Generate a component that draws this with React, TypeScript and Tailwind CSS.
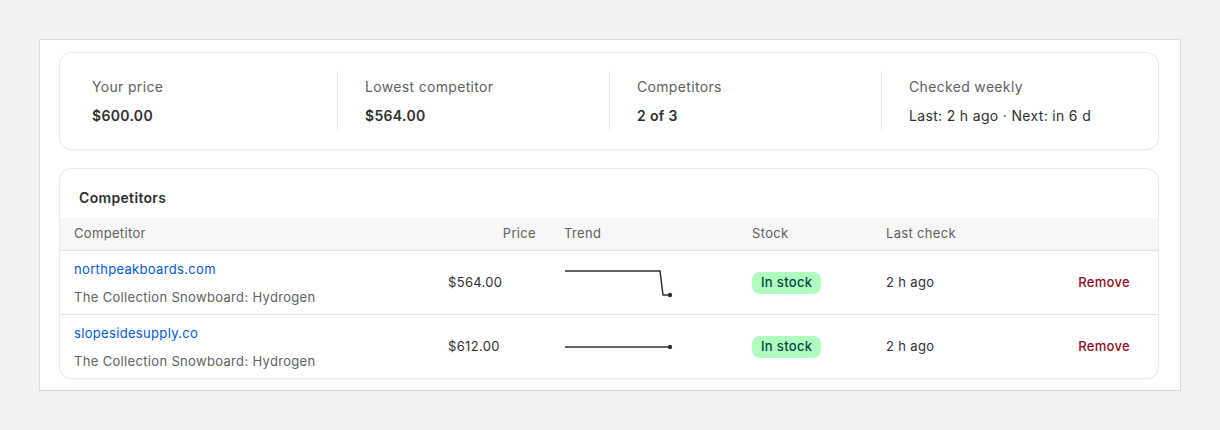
import React from "react";

const stats = [
  { label: "Your price", value: "$600.00" },
  { label: "Lowest competitor", value: "$564.00" },
  { label: "Competitors", value: "2 of 3" },
  { label: "Checked weekly", value: "Last: 2 h ago · Next: in 6 d", plain: true },
];

const rows = [
  {
    domain: "northpeakboards.com",
    product: "The Collection Snowboard: Hydrogen",
    price: "$564.00",
    trend: "M1 3 L96 3 L99 27 L106 27",
    end: [106, 27],
  },
  {
    domain: "slopesidesupply.co",
    product: "The Collection Snowboard: Hydrogen",
    price: "$612.00",
    trend: "M1 15 L106 15",
    end: [106, 15],
  },
];

const cols = "grid grid-cols-[374px_116px_188px_134px_1fr_150px]";

function Sparkline({ d, end }: { d: string; end: number[] }) {
  return (
    <svg width="110" height="30" viewBox="0 0 110 30" className="block">
      <path d={d} fill="none" stroke="#303030" strokeWidth="1.5" />
      <circle cx={end[0]} cy={end[1]} r="2.2" fill="#303030" />
    </svg>
  );
}

export default function App() {
  return (
    <div
      className="min-h-[430px] bg-[#f1f2f4] pt-[39px] pl-[39px] pr-[39px] tracking-[0.33px] text-[#303030]"
      style={{ fontFamily: "Inter, 'Noto Sans', sans-serif" }}
    >
      <div className="h-[352px] border border-[#dadbdd] bg-white pt-[13px] pl-[20px] pr-[22px]">
        {/* Summary */}
        <div className="rounded-xl bg-white px-[5px] py-[18px] shadow-[0_0_0_1px_#ebebeb,0_1px_2px_0_rgba(0,0,0,0.12)]">
          <div className="grid grid-cols-4">
            {stats.map((s, i) => (
              <div
                key={s.label}
                className={`flex h-[60px] flex-col justify-center gap-[9px] pl-[27px] ${
                  i > 0 ? "border-l border-[#ebebeb]" : ""
                }`}
              >
                <div className="text-[14px] leading-5 text-[#616161]">{s.label}</div>
                <div
                  className={`text-[14px] leading-5 ${
                    s.plain ? "font-normal text-[#303030]" : "font-semibold text-[#303030]"
                  }`}
                >
                  {s.value}
                </div>
              </div>
            ))}
          </div>
        </div>

        {/* Competitors table */}
        <div className="mt-[20px] overflow-hidden rounded-xl bg-white shadow-[0_0_0_1px_#ebebeb,0_1px_2px_0_rgba(0,0,0,0.12)]">
          <div className="px-[19px] pt-[19px] pb-[10px] text-[14px] font-semibold leading-5 text-[#303030]">
            Competitors
          </div>
          <div
            className={`${cols} h-[33px] items-center border-b border-[#e3e3e3] bg-[#f7f7f7] text-[13px] text-[#616161]`}
          >
            <div className="pl-[14px]">Competitor</div>
            <div className="pr-[14px] text-right">Price</div>
            <div className="pl-[14px]">Trend</div>
            <div className="pl-[14px]">Stock</div>
            <div className="pl-[14px]">Last check</div>
            <div />
          </div>
          {rows.map((r, i) => (
            <div
              key={r.domain}
              className={`${cols} items-center text-[13px] ${
                i < rows.length - 1 ? "h-[64px] border-b border-[#e3e3e3]" : "h-[63px]"
              }`}
            >
              <div className="flex flex-col gap-[8px] pl-[14px]">
                <a className="leading-5 text-[#005bd3]">{r.domain}</a>
                <span className="leading-5 text-[#616161]">{r.product}</span>
              </div>
              <div className="pl-[14px] text-[#303030]">{r.price}</div>
              <div className="pl-[14px]">
                <Sparkline d={r.trend} end={r.end} />
              </div>
              <div className="pl-[14px]">
                <span className="inline-flex h-[22px] items-center rounded-lg bg-[#affebf] px-[9px] font-medium text-[#014b40]">
                  In stock
                </span>
              </div>
              <div className="pl-[14px] text-[#303030]">2 h ago</div>
              <div className="pr-[28px] text-right font-medium text-[#8e0b21]">Remove</div>
            </div>
          ))}
        </div>
      </div>
    </div>
  );
}
